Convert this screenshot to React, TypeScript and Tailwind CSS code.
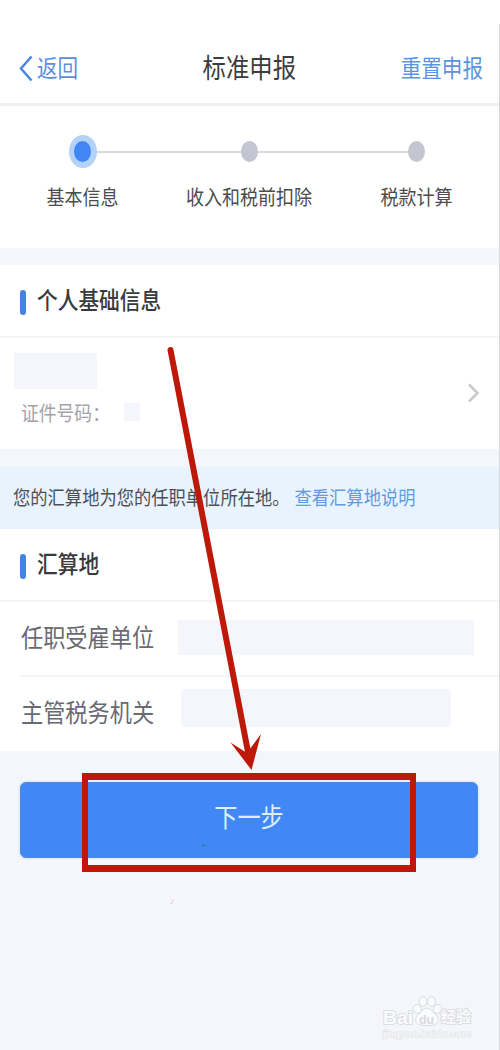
import React from 'react';
import clsx from 'clsx';

interface LabelProps {
  children: React.ReactNode;
  className?: string;
}

// Tall, narrow lettering used by every label on the page
const Label: React.FC<LabelProps> = ({ children, className }) => (
  <span className={clsx('inline-block scale-y-[1.15] whitespace-nowrap leading-6', className)}>{children}</span>
);

const steps = [
  { name: '基本信息', active: true },
  { name: '收入和税前扣除', active: false },
  { name: '税款计算', active: false },
];

const Header = () => (
  <header className="flex h-[106px] items-center justify-between border-b-[3px] border-[#f0f0f3] pl-[19px] pr-[17px] pt-[31px]">
    <button className="flex w-[79px] items-center text-[20.6px] text-[#5a8fda]">
      <svg className="mr-1 mt-[2px] h-[27px] w-[14px] shrink-0" viewBox="0 0 14 27" fill="none" stroke="#4a86dd" strokeWidth="2.5">
        <path d="M12.5 1.5 2 13.5l10.5 12" />
      </svg>
      <Label>返回</Label>
    </button>
    <h1 className="text-[23.4px] text-[#3c3c3c]"><Label>标准申报</Label></h1>
    <button className="text-[20.6px] text-[#5a94e3]"><Label>重置申报</Label></button>
  </header>
);

const Steps = () => (
  <nav className="relative flex h-[142px] justify-between bg-white pt-[29px]">
    <div className="absolute left-[97px] right-[84px] top-[45px] h-[2px] bg-[#d9d9de]" />
    {steps.map(step => (
      <div key={step.name} className="relative flex w-[165px] shrink-0 flex-col items-center last:w-[167px]">
        <div className="flex h-[33px] items-center">
          {step.active ? (
            <div className="flex h-[33px] w-[28px] items-center justify-center rounded-[50%] bg-[#b3d2f7]">
              <div className="h-[21px] w-[17px] rounded-[50%] bg-[#4285f4]" />
            </div>
          ) : (
            <div className="h-[21px] w-[17px] rounded-[50%] bg-[#c3c6d0]" />
          )}
        </div>
        <Label className="mt-[16px] text-[18px] text-[#4c4c4c]">{step.name}</Label>
      </div>
    ))}
  </nav>
);

const SectionTitle: React.FC<LabelProps> = ({ children }) => (
  <div className="flex h-[73px] items-center border-b-2 border-[#f4f5f8] pl-[20px]">
    <div className="mt-[4px] h-[25px] w-[6px] rounded-[3px] bg-[#4583e0]" />
    <h2 className="mb-[1px] ml-[11px] text-[20.7px] font-medium text-[#3a3a3a]"><Label>{children}</Label></h2>
  </div>
);

const Watermark = () => (
  <div className="absolute left-[382px] top-[995px] h-[45px] w-[95px] font-['Liberation_Sans','Noto_Sans_CJK_SC',sans-serif]">
    <svg className="h-full w-full" viewBox="0 0 95 45">
      <g fill="#fafbfc" stroke="#dcdde1" strokeWidth="1">
        <ellipse cx="35.5" cy="14" rx="3.8" ry="4.6" transform="rotate(-20 35.5 14)" />
        <ellipse cx="41" cy="6.5" rx="3.8" ry="5" />
        <ellipse cx="49.5" cy="6.5" rx="3.8" ry="5" />
        <ellipse cx="55.5" cy="14" rx="3.8" ry="4.6" transform="rotate(20 55.5 14)" />
        <path d="M45 13c-3 0-5 3-7 5-3 2.500-5 5-4 8.500 1 3.500 5 4 11 4s10-.5 11-4c1-3.500-1-6-4-8.500-2-2-4-5-7-5Z" />
        <g paintOrder="stroke" strokeWidth="2">
          <text x="1" y="28.500" fontSize="19" fontWeight="bold" textLength="30" lengthAdjust="spacingAndGlyphs">Bai</text>
          <text x="59" y="27" fontSize="15" fontWeight="bold" textLength="30" lengthAdjust="spacingAndGlyphs">经验</text>
        </g>
      </g>
      <text x="37" y="28.500" fontSize="13" fontWeight="bold" fill="#d8dade" textLength="15" lengthAdjust="spacingAndGlyphs">du</text>
      <text x="1" y="42" fontSize="9" fill="#fafbfc" stroke="#e2e3e7" strokeWidth="1.2" paintOrder="stroke" textLength="88" lengthAdjust="spacingAndGlyphs">jingyan.baidu.com</text>
    </svg>
  </div>
);

const Annotations = () => (
  <div className="pointer-events-none absolute inset-0">
    <svg className="absolute inset-0 h-[1050px] w-[500px]" viewBox="0 0 500 1050">
      <path d="M170.500 350 249 757" stroke="#be1809" strokeWidth="6" strokeLinecap="round" />
      <path d="M251.500 770 230.500 742.500 247 753 261 734Z" fill="#be1809" />
      <path d="M202 845.500h3" stroke="#b8326a" strokeWidth="1.2" />
      <path d="m171 904 3-5" stroke="#f3a9a9" strokeWidth="1" strokeDasharray="2 1" />
    </svg>
    <div className="absolute left-[82px] top-[773px] h-[99px] w-[334px] border-x-[6px] border-y-[7px] border-[#be1809]" />
  </div>
);

const App = () => {
  return (
    <div className="relative h-[1050px] w-[500px] overflow-hidden bg-[#f4f6fb] font-['Noto_Sans_CJK_SC',sans-serif]">
      <div className="bg-white">
        <Header />
        <Steps />
      </div>

      <section className="mt-[17px] h-[184px] bg-white">
        <SectionTitle>个人基础信息</SectionTitle>
        <div className="flex h-[111px] items-start justify-between pl-[14px] pr-[20px] pt-[15px]">
          <div>
            <div className="h-[36px] w-[83px] bg-[#f4f6fb]" />
            <div className="mt-[11px] flex items-center pl-[7px] text-[17.8px] text-[#a3a3a7]">
              <Label>证件号码：</Label>
              <div className="ml-[14px] h-[18px] w-[16px] bg-[#f4f6fb]" />
            </div>
          </div>
          <svg className="mt-[30px] h-[20px] w-[13px]" viewBox="0 0 13 20" fill="none" stroke="#cbcbce" strokeWidth="2.6">
            <path d="m2 1.500 8.500 8.500L2 18.500" />
          </svg>
        </div>
      </section>

      <div className="mt-[18px] flex h-[62px] items-center bg-[#e9f3fe] pb-[2px] pl-[13px] text-[17.3px]">
        <Label className="text-[#4b5056]">您的汇算地为您的任职单位所在地。</Label>
        <Label className="ml-[5px] text-[#629be2]">查看汇算地说明</Label>
      </div>

      <section className="bg-white">
        <SectionTitle>汇算地</SectionTitle>
        <div className="flex h-[73px] items-center pl-[21px] text-[22.2px] text-[#696a72]">
          <Label className="mb-[8px]">任职受雇单位</Label>
          <div className="mb-[2px] ml-[24px] h-[35px] w-[296px] bg-[#f4f6fb]" />
        </div>
        <div className="ml-[20px] h-[2px] bg-[#f4f5f8]" />
        <div className="flex h-[74px] items-center pl-[21px] text-[22.2px] text-[#696a72]">
          <Label className="mb-[9px]">主管税务机关</Label>
          <div className="mb-[12px] ml-[27px] h-[38px] w-[270px] bg-[#f4f6fb]" />
        </div>
      </section>

      <div className="pl-[20px] pr-[22px] pt-[31px]">
        <button className="flex h-[76px] w-full items-center justify-center rounded-[6px] border border-[#5688d9] bg-[#4287f6] pb-[11px] text-[23.2px] text-[#dcefff] shadow-[0_0_2px_1px_#d3eaff]">
          <Label>下一步</Label>
        </button>
      </div>

      <Annotations />
      <Watermark />
      <div className="absolute bottom-0 right-0 top-[24px] w-px bg-[#d6d7dc]" />
    </div>
  );
};

export default App;
